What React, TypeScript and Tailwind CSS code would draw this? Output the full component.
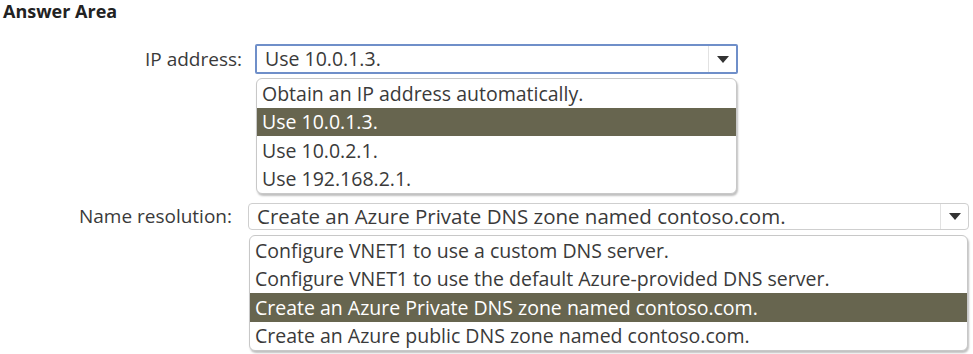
import React from 'react';

const font = { fontFamily: '"Open Sans", "Noto Sans", Arial, sans-serif' };

function Caret() {
  return (
    <svg width="12" height="7" viewBox="0 0 12 7" className="block">
      <path d="M0 0 H12 L6 7 Z" fill="#333" />
    </svg>
  );
}

type DropProps = {
  value: string;
  options: string[];
  selected: number;
  focused?: boolean;
  valueSize: string;
};

function Dropdown({ value, options, selected, focused, valueSize }: DropProps) {
  return (
    <div className="w-full">
      <div
        className={
          focused
            ? 'flex h-[30px] items-stretch rounded-[2px] border-2 border-[#6f8fc9] bg-white'
            : 'flex h-[27px] items-stretch rounded-[4px] border border-[#cfcfcf] bg-white'
        }
      >
        <div className={`flex flex-1 items-center pl-[8px] leading-none text-[#3a3a3a] ${valueSize}`}>{value}</div>
        <div className="flex w-[28px] items-center justify-center border-l border-[#e2e2e2]">
          <Caret />
        </div>
      </div>
      <div
        className={
          focused
            ? 'mx-[1px] mt-[4px] overflow-hidden rounded-[6px] border border-[#c8c8c8] bg-white shadow-[1px_2px_2px_rgba(0,0,0,0.25)]'
            : 'mx-[1px] mt-[5px] overflow-hidden rounded-[6px] border border-[#c8c8c8] bg-white shadow-[1px_2px_2px_rgba(0,0,0,0.25)]'
        }
      >
        {options.map((o, i) => (
          <div
            key={o}
            className={
              i === selected
                ? 'flex h-[28.5px] items-center bg-[#67654f] pl-[5px] text-white'
                : 'flex h-[28.5px] items-center pl-[5px] text-[#3a3a3a]'
            }
          >
            {o}
          </div>
        ))}
      </div>
    </div>
  );
}

export default function App() {
  return (
    <div className="h-[354px] w-[973px] bg-white text-[19.5px] leading-none" style={font}>
      <h1 className="pl-[3px] pt-[0px] text-[18px] font-bold leading-[22px] text-[#222]">Answer Area</h1>

      {/* IP address */}
      <div className="mt-[22px] flex items-start">
        <div className="w-[255px] pr-[13px] pt-[5.5px] text-right text-[19px] text-[#3a3a3a]">IP address:</div>
        <div className="w-[483px]">
          <Dropdown
            focused
            valueSize="text-[19.5px]"
            value="Use 10.0.1.3."
            selected={1}
            options={['Obtain an IP address automatically.', 'Use 10.0.1.3.', 'Use 10.0.2.1.', 'Use 192.168.2.1.']}
          />
        </div>
      </div>

      {/* Name resolution */}
      <div className="mt-[9px] flex items-start">
        <div className="w-[248px] pr-[16px] pt-[4px] text-right text-[19px] text-[#3a3a3a]">Name resolution:</div>
        <div className="w-[721px]">
          <Dropdown
            valueSize="text-[20.5px]"
            value="Create an Azure Private DNS zone named contoso.com."
            selected={2}
            options={[
              'Configure VNET1 to use a custom DNS server.',
              'Configure VNET1 to use the default Azure-provided DNS server.',
              'Create an Azure Private DNS zone named contoso.com.',
              'Create an Azure public DNS zone named contoso.com.',
            ]}
          />
        </div>
      </div>
    </div>
  );
}
